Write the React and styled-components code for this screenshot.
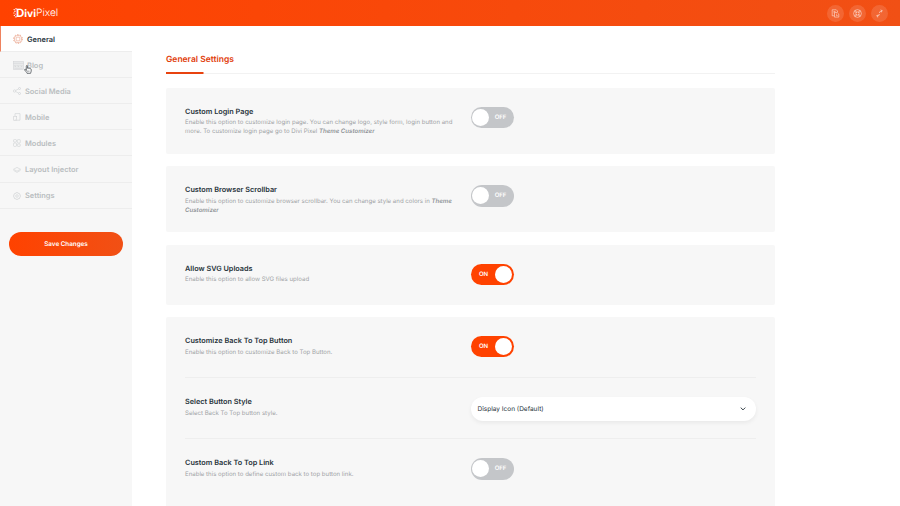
import React, { useState } from 'react'
import styled, { createGlobalStyle } from 'styled-components'

export default function App() {
  const [active, setActive] = useState('General')

  return (
    <Page>
      <GlobalStyle />
      <Header>
        <Logo>
          <LogoDots />
          <LogoBold>Divi</LogoBold>
          <LogoThin>Pixel</LogoThin>
        </Logo>
        <HeaderActions>
          <RoundButton aria-label="Docs"><DocsIcon /></RoundButton>
          <RoundButton aria-label="Support"><SupportIcon /></RoundButton>
          <RoundButton aria-label="Import and export"><TransferIcon /></RoundButton>
        </HeaderActions>
      </Header>

      <Body>
        <Sidebar>
          {menu.map(({ name, Icon }) => (
            <MenuItem key={name} $active={name === active} onClick={() => setActive(name)}>
              <MenuIcon $wide={name === 'Blog' || name === 'General'}><Icon /></MenuIcon>
              <span>{name}</span>
              {name === 'Blog' && <Pointer><HandIcon /></Pointer>}
            </MenuItem>
          ))}
          <SaveButton>Save Changes</SaveButton>
        </Sidebar>

        <Content>
          <Heading>General Settings</Heading>
          <HeadingLine />

          <Card>
            <Setting
              title="Custom Login Page"
              text={<>Enable this option to customize login page. You can change logo, style form, login button and more. To customize login page go to Divi Pixel <em>Theme Customizer</em></>}
            >
              <Toggle />
            </Setting>
          </Card>
          <Card>
            <Setting
              title="Custom Browser Scrollbar"
              text={<>Enable this option to customize browser scrollbar. You can change style and colors in <em>Theme Customizer</em></>}
            >
              <Toggle />
            </Setting>
          </Card>
          <Card>
            <Setting title="Allow SVG Uploads" text="Enable this option to allow SVG files upload">
              <Toggle initial />
            </Setting>
          </Card>
          <Card $last>
            <Setting title="Customize Back To Top Button" text="Enable this option to customize Back to Top Button.">
              <Toggle initial />
            </Setting>
            <Setting title="Select Button Style" text="Select Back To Top button style.">
              <Select>
                Display Icon (Default)
                <ChevronIcon />
              </Select>
            </Setting>
            <Setting title="Custom Back To Top Link" text="Enable this option to define custom back to top button link.">
              <Toggle />
            </Setting>
          </Card>
        </Content>
      </Body>
    </Page>
  )
}

function Setting({ title, text, children }) {
  return (
    <Row>
      <div>
        <RowTitle>{title}</RowTitle>
        <RowText>{text}</RowText>
      </div>
      <div>{children}</div>
    </Row>
  )
}

function Toggle({ initial = false }) {
  const [on, setOn] = useState(initial)
  return (
    <Switch role="switch" aria-checked={on} $on={on} onClick={() => setOn(!on)}>
      <Knob />
      <SwitchLabel>{on ? 'ON' : 'OFF'}</SwitchLabel>
    </Switch>
  )
}

// **Icons**
function LogoDots() {
  return (
    <svg width="4" height="10" viewBox="0 0 4 10" fill="none" stroke="#fff" strokeWidth=".9">
      <path d="M.6 1.500h1.200M2.200.8h1.600M1 3.200h1.800M.3 5h1.200M1.800 6.200h1M.8 7.500h1.200M1.900 8.900h1.900" />
    </svg>
  )
}

function DocsIcon() {
  return (
    <svg width="9" height="9" viewBox="0 0 9 9" fill="none" stroke="currentColor" strokeWidth=".8">
      <path d="M6.500 3V2L5.300.8H1.200v6h2M2.500 2.500h2M2.500 3.800h1" />
      <path d="M3.500 3.500h2.700l1.600 1.600v3H3.500zM5 5.200h1M5 6.600h1.700" />
    </svg>
  )
}

function SupportIcon() {
  return (
    <svg width="9" height="9" viewBox="0 0 9 9" fill="none" stroke="currentColor" strokeWidth=".8">
      <circle cx="4.500" cy="4.500" r="3.900" />
      <circle cx="4.500" cy="4.500" r="1.600" />
      <path d="M1.600 2.500l1.800 1M2.500 1.400l1 1.900M7.400 2.500l-1.800 1M6.500 1.400l-1 1.900M1.600 6.500l1.800-1M2.500 7.600l1-1.900M7.400 6.500l-1.800-1M6.500 7.600l-1-1.900" />
    </svg>
  )
}

function TransferIcon() {
  return (
    <svg width="9" height="9" viewBox="0 0 9 9" fill="none" stroke="currentColor" strokeWidth=".9">
      <path d="M4.500 4c0-1.500.7-2 2.700-2M5.900.6L7.300 2 5.900 3.400" />
      <path d="M4.300 5C4.300 6.500 3.800 7 1.800 7M3.100 5.600L1.700 7l1.400 1.400" />
    </svg>
  )
}

function GearIcon() {
  return (
    <svg width="10" height="10" viewBox="0 0 10 10" fill="none" stroke="currentColor" strokeWidth=".6">
      <circle cx="5" cy="5" r="2" />
      <circle cx="5" cy="5" r="3.700" />
      <circle cx="5" cy="5" r="4.400" strokeWidth=".9" strokeDasharray="1.380 1.380" />
    </svg>
  )
}

function BlogIcon() {
  return (
    <svg width="11" height="9" viewBox="0 0 11 9" fill="none" stroke="currentColor" strokeWidth=".5">
      <rect x=".4" y=".4" width="10.200" height="8.200" fill="#e9eaeb" />
      <path d="M.4 2.300h10.200M1.500 4l.8 2 .8-2M4.500 4l.8 2 .8-2M7.700 4l.8 2 .8-2M1.500 7.300h8" />
    </svg>
  )
}

function ShareIcon() {
  return (
    <svg width="8" height="8" viewBox="0 0 8 8" fill="none" stroke="currentColor" strokeWidth=".6">
      <circle cx="1.600" cy="4" r="1.200" />
      <circle cx="6.500" cy="1.500" r="1" />
      <circle cx="6.500" cy="6.500" r="1" />
      <path d="M2.700 3.400l2.900-1.500M2.700 4.600l2.900 1.500" />
    </svg>
  )
}

function MobileIcon() {
  return (
    <svg width="8" height="8" viewBox="0 0 8 8" fill="none" stroke="currentColor" strokeWidth=".6">
      <path d="M2 3V.6h5v6.600H4" />
      <rect x=".7" y="3.300" width="3" height="4.200" />
      <path d="M1.800 6.600h.8" />
    </svg>
  )
}

function ModulesIcon() {
  return (
    <svg width="8" height="8" viewBox="0 0 8 8" fill="none" stroke="currentColor" strokeWidth=".6">
      <rect x=".5" y=".6" width="3" height="2.400" rx=".8" />
      <rect x="4.300" y=".6" width="3" height="3.400" rx=".8" />
      <rect x=".5" y="4" width="3" height="3.400" rx=".8" />
      <rect x="4.300" y="5" width="3" height="2.400" rx=".8" />
    </svg>
  )
}

function LayersIcon() {
  return (
    <svg width="8" height="8" viewBox="0 0 8 8" fill="none" stroke="currentColor" strokeWidth=".6">
      <path d="M4 1.400l3.500 1.900L4 5.200.5 3.300z" />
      <path d="M.5 4.400L4 6.400l3.500-2" />
    </svg>
  )
}

function SettingsIcon() {
  return (
    <svg width="8" height="8" viewBox="0 0 8 8" fill="none" stroke="currentColor" strokeWidth=".6">
      <path d="M3.300.5h1.400l.3 1 1-.4 1 1-.4 1 1 .3v1.300l-1 .3.4 1-1 1-1-.5-.3 1H3.300L3 6.500l-1 .5-1-1 .4-1-1-.3V3.400l1-.3-.4-1 1-1 1 .4z" />
      <circle cx="4" cy="4" r="1.300" />
    </svg>
  )
}

function ChevronIcon() {
  return (
    <svg width="6" height="4" viewBox="0 0 6 4" fill="none" stroke="#3a454b" strokeWidth="1">
      <path d="M.7.600L3 2.900 5.300.6" />
    </svg>
  )
}

function HandIcon() {
  return (
    <svg width="8" height="9" viewBox="0 0 8 9" fill="#fff" stroke="#4d5358" strokeWidth=".8" strokeLinejoin="round">
      <path d="M2.300 5.500V1.100c0-.9 1.200-.9 1.200 0v2.200c.3-.5 1.200-.4 1.200.2.300-.4 1.100-.3 1.200.3.500-.3 1.300 0 1.300.7v1.600c0 .8-.6 1.200-.6 2.200H3c-.2-1-1.400-2-2.300-3.200-.5-.7.500-1.300 1-.7z" />
      <path d="M3.700 5.500v1.600M4.900 5.500v1.600" strokeWidth=".5" />
    </svg>
  )
}

const menu = [
  { name: 'General', Icon: GearIcon },
  { name: 'Blog', Icon: BlogIcon },
  { name: 'Social Media', Icon: ShareIcon },
  { name: 'Mobile', Icon: MobileIcon },
  { name: 'Modules', Icon: ModulesIcon },
  { name: 'Layout Injector', Icon: LayersIcon },
  { name: 'Settings', Icon: SettingsIcon },
]

// **Styled Components**
const GlobalStyle = createGlobalStyle`
  * { box-sizing: border-box; }
  body {
    margin: 0;
    background: #fff;
    font-family: Inter, "Liberation Sans", sans-serif;
    text-rendering: geometricPrecision;
    overflow: hidden;
  }
  button {
    font-family: inherit;
    text-rendering: inherit;
    border: 0;
    padding: 0;
    cursor: pointer;
  }
  svg { display: block; flex: none; }
`
const Page = styled.div`
  height: 506px;
  display: flex;
  flex-direction: column;
  overflow: hidden;
`
const Header = styled.header`
  height: 26px;
  flex: none;
  display: flex;
  align-items: center;
  justify-content: space-between;
  padding: 0 12.500px 0 13px;
  background: linear-gradient(90deg, #ff4200, #f15015);
`
const Logo = styled.div`
  display: flex;
  align-items: center;
  color: #fff;
  font-size: 10.300px;
  line-height: 12px;
`
const LogoBold = styled.span`
  font-weight: 700;
  margin-left: -1px;

  &::first-letter { font-size: 11.500px; }
`
const LogoThin = styled.span`
  font-weight: 300;
  letter-spacing: -0.1px;
`
const HeaderActions = styled.div`
  display: flex;
  gap: 5px;
`
const RoundButton = styled.button`
  width: 17px;
  height: 17px;
  border-radius: 50%;
  display: flex;
  align-items: center;
  justify-content: center;
  color: rgba(255, 255, 255, 0.6);
  background: rgba(255, 255, 255, 0.13);
`
const Body = styled.div`
  flex: 1;
  display: flex;
  min-height: 0;
`
const Sidebar = styled.nav`
  width: 132px;
  flex: none;
  background: #f7f7f7;
`
const MenuItem = styled.div`
  position: relative;
  height: 26.100px;
  display: flex;
  align-items: center;
  padding: 1px 0 0 ${p => (p.$active ? 12 : 13)}px;
  font-size: 7.450px;
  font-weight: 600;
  cursor: pointer;
  color: ${p => (p.$active ? '#27343b' : '#b9bdc0')};
  background: ${p => (p.$active ? '#fff' : 'transparent')};
  border-left: ${p => (p.$active ? '1px solid #ee825f' : '0')};
  border-bottom: 1px solid #ededed;

  svg { color: ${p => (p.$active ? '#e9a087' : '#cfd1d3')}; }
`
const MenuIcon = styled.span`
  width: ${p => (p.$wide ? 14 : 12)}px;
  flex: none;
`
const Pointer = styled.span`
  position: absolute;
  left: 24px;
  top: 13px;
`
const SaveButton = styled.button`
  display: block;
  width: 114px;
  height: 24px;
  margin: 23.600px 0 0 9px;
  border-radius: 12px;
  color: #fff;
  font-size: 6.300px;
  font-weight: 600;
  background: linear-gradient(90deg, #ff4200, #f15015);
`
const Content = styled.main`
  width: 609.400px;
  margin-left: 34px;
  padding-top: 28.600px;
`
const Heading = styled.h1`
  margin: 0;
  font-size: 8.500px;
  line-height: 11px;
  font-weight: 600;
  color: #e13c0a;
`
const HeadingLine = styled.div`
  height: 2px;
  margin: 6.400px 0 14px;
  background: linear-gradient(#e8430f, #e8430f) 0 0 / 37.500px 2px no-repeat,
    linear-gradient(#f2f2f2, #f2f2f2) 0 1px / 100% 1px no-repeat;
`
const Card = styled.section`
  margin-bottom: 12.300px;
  padding: 0 19px ${p => (p.$last ? 30 : 0)}px;
  border-radius: 2px;
  background: #f7f7f7;
`
const Row = styled.div`
  display: grid;
  grid-template-columns: 269px 285.900px;
  column-gap: 16.500px;
  min-height: 60.200px;
  padding: 19px 0 17.500px;

  & + & { border-top: 1px solid #eeeeee; }
`
const RowTitle = styled.h2`
  margin: 0 0 2.500px;
  font-size: 7.300px;
  line-height: 9px;
  font-weight: 600;
  color: #27343b;
`
const RowText = styled.p`
  margin: 0;
  font-size: 6.080px;
  line-height: 9px;
  color: #9fa3a6;

  em { font-weight: 600; color: #909497; }
`
const Switch = styled.button`
  width: 43px;
  height: 21.300px;
  border-radius: 11px;
  display: flex;
  align-items: center;
  flex-direction: ${p => (p.$on ? 'row-reverse' : 'row')};
  padding: 0 1.500px;
  background: ${p => (p.$on ? '#ff4200' : '#c4c6c9')};
`
const Knob = styled.span`
  width: 17px;
  height: 17px;
  flex: none;
  border-radius: 50%;
  background: #fff;
`
const SwitchLabel = styled.span`
  flex: 1;
  text-align: center;
  font-size: 6px;
  font-weight: 600;
  color: #fff;
`
const Select = styled.div`
  height: 23.500px;
  display: flex;
  align-items: center;
  justify-content: space-between;
  padding: 0 10px 0 7px;
  border-radius: 12px;
  font-size: 6.500px;
  color: #27343b;
  background: #fff;
  box-shadow: 0 2px 4px rgba(0, 0, 0, 0.06);
`
